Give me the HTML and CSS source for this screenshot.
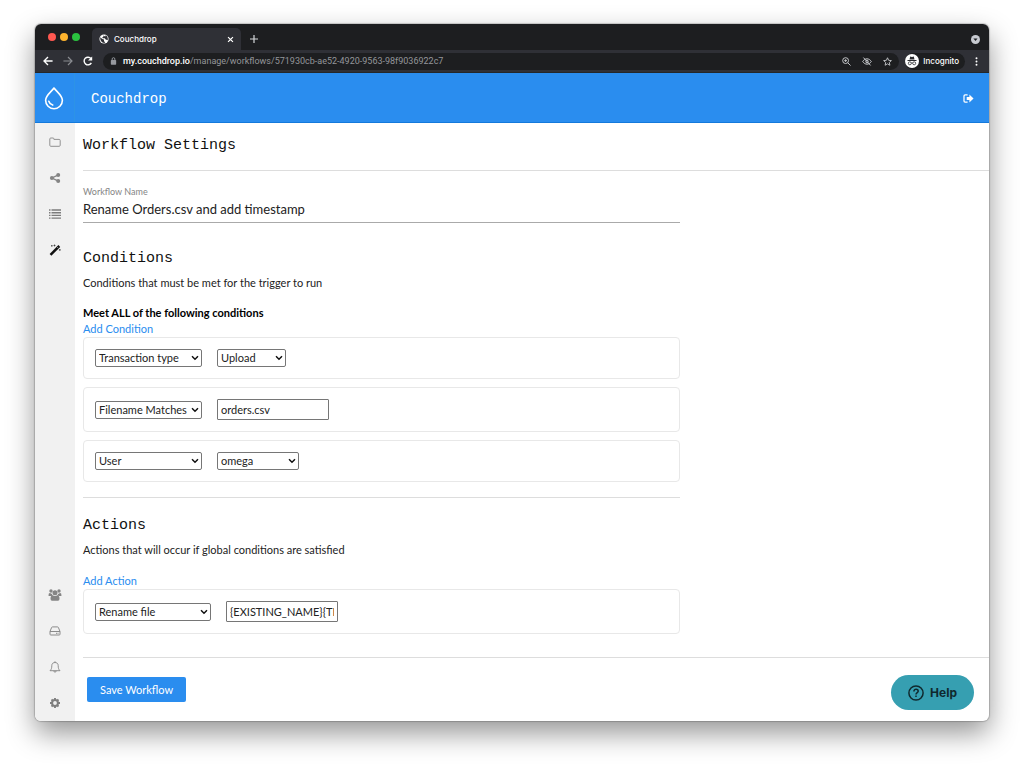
FILE: index.html
```html
<!DOCTYPE html>
<html lang="en">
<head>
<meta charset="utf-8">
<title>Couchdrop</title>
<meta name="viewport" content="width=device-width, initial-scale=1">
<link rel="stylesheet" href="styles.css">
</head>
<body>
<div class="window">
  <div class="tabstrip">
    <div class="lights"><span class="light red"></span><span class="light yellow"></span><span class="light green"></span></div>
    <div class="tab">
      <svg class="globe" viewBox="0 0 24 24" width="10" height="10"><circle cx="12" cy="12" r="11" fill="#fff"/><path d="M3 8l5 4 4 1v4l3 4c-6 2-13-4-12-13zM10 3l1 3-3 2 1 2h5l2 3 5 2c1-5-1-10-5-12l-1 3-3-1z" fill="#2f3036"/></svg>
      <span class="tab-title">Couchdrop</span>
      <button class="plain" aria-label="Close tab"><svg viewBox="0 0 10 10" width="7" height="7"><path d="M1.500 1.500l7 7m0-7l-7 7" stroke="#fff" stroke-width="1.700"/></svg></button>
    </div>
    <button class="plain new-tab" aria-label="New tab"><svg viewBox="0 0 10 10" width="8" height="8"><path d="M5 0v10M0 5h10" stroke="#d6d7da" stroke-width="1.500"/></svg></button>
    <button class="plain tab-search" aria-label="Search tabs"><svg viewBox="0 0 10 10" width="9" height="9"><circle cx="5" cy="5" r="5" fill="#c7cad0"/><path d="M2.700 3.800h4.600L5 6.800z" fill="#1d1e20"/></svg></button>
  </div>
  <div class="toolbar">
    <button class="plain" aria-label="Back"><svg viewBox="0 0 12 12" width="10" height="10" fill="none" stroke="#fff" stroke-width="1.600"><path d="M11.500 6H1.500M6 1.200L1.200 6 6 10.800"/></svg></button>
    <button class="plain" aria-label="Forward"><svg viewBox="0 0 12 12" width="10" height="10" fill="none" stroke="#898b90" stroke-width="1.400"><path d="M.5 6h10M6 1.200L10.800 6 6 10.800"/></svg></button>
    <button class="plain" aria-label="Reload"><svg viewBox="0 0 12 12" width="10" height="10"><path d="M10 8.200A4.600 4.600 0 1 1 9.600 3.200" fill="none" stroke="#fff" stroke-width="1.700"/><path d="M11 .5v5H6z" fill="#fff"/></svg></button>
    <div class="address">
      <svg viewBox="0 0 10 12" width="7" height="8"><rect x="1" y="4.500" width="8" height="7" rx="1" fill="#96999e"/><path d="M3 5V3a2 2 0 0 1 4 0v2" fill="none" stroke="#96999e" stroke-width="1.400"/></svg>
      <span class="url"><b>my.couchdrop.io</b>/manage/workflows/571930cb-ae52-4920-9563-98f9036922c7</span>
      <span class="address-tools">
        <button class="plain" aria-label="Zoom"><svg viewBox="0 0 12 12" width="9" height="9" fill="none" stroke="#c6c8cc" stroke-width="1.300"><circle cx="4.800" cy="4.800" r="3.900"/><path d="M7.700 7.700l3.700 3.700M3 4.800h3.600M4.800 3v3.600"/></svg></button>
        <button class="plain" aria-label="Cookies blocked"><svg viewBox="0 0 14 12" width="10" height="9" fill="none" stroke="#c6c8cc" stroke-width="1.400"><path d="M1 6c3-5 9-5 12 0-3 5-9 5-12 0z"/><circle cx="7" cy="6" r="1.800"/><path d="M2 .5l10 11"/></svg></button>
        <button class="plain" aria-label="Bookmark"><svg viewBox="0 0 12 12" width="9" height="9" fill="none" stroke="#c6c8cc" stroke-width="1.200"><path d="M6 1l1.500 3.400 3.700.4-2.800 2.500.8 3.700L6 9.100 2.800 11l.8-3.700L.8 4.800l3.700-.4z"/></svg></button>
      </span>
    </div>
    <div class="incognito">
      <svg viewBox="0 0 14 14" width="14" height="14"><circle cx="7" cy="7" r="7" fill="#fff"/><path d="M4.500 5.500l.7-3 1.800.4 1.800-.4.7 3zM2.500 6h9v.9h-9z" fill="#2c2d31"/><g fill="none" stroke="#2c2d31" stroke-width=".8"><circle cx="4.800" cy="9.300" r="1.500"/><circle cx="9.200" cy="9.300" r="1.500"/><path d="M6.300 9q.7-.5 1.400 0"/></g></svg>
      <span>Incognito</span>
    </div>
    <button class="plain menu" aria-label="Menu"><svg viewBox="0 0 4 12" width="3" height="9" fill="#fff"><circle cx="2" cy="1.600" r="1.300"/><circle cx="2" cy="6" r="1.300"/><circle cx="2" cy="10.400" r="1.300"/></svg></button>
  </div>
  <header class="header">
    <a class="logo" href="#" aria-label="Home"><svg viewBox="0 0 20 24" width="20" height="24" fill="none" stroke="#fff" stroke-width="1.600" stroke-linecap="round"><path d="M10 2C7.500 5.500 1.600 9.500 1.600 14.300a8.400 8.400 0 0 0 16.800 0C18.400 9.500 12.500 5.500 10 2z" stroke-linejoin="round"/><path d="M4.800 15.300c.6 2 2 3.300 3.900 3.800"/></svg></a>
    <span class="brand">Couchdrop</span>
    <a class="logout" href="#" aria-label="Log out"><svg viewBox="0 0 12 10" width="11" height="9"><path d="M5 1.100H2.200A1.200 1.200 0 0 0 1 2.300v5.400a1.200 1.200 0 0 0 1.200 1.200H5" fill="none" stroke="#fff" stroke-width="1.400"/><path d="M4 3.200h3V.6L11.600 5 7 9.400V6.800H4z" fill="#fff"/></svg></a>
  </header>
  <div class="app">
    <nav class="sidebar">
      <a href="#" aria-label="Files"><svg viewBox="0 0 12 12" width="12" height="12" fill="none" stroke="#929292"><path d="M.8 9.300V3q0-1 1-1h2.300q.8 0 .8 1v.4h5.300q1 0 1 1v4.900q0 1-1 1H1.800q-1 0-1-1z"/></svg></a>
      <a href="#" aria-label="Shares"><svg viewBox="0 0 12 12" width="12" height="12" fill="#848484"><path d="M9.300 2.800L3 6l6.300 3.200" fill="none" stroke="#848484" stroke-width="1.300"/><circle cx="9.200" cy="2.900" r="2"/><circle cx="2.900" cy="6" r="2"/><circle cx="9.200" cy="9.100" r="2"/></svg></a>
      <a href="#" aria-label="Logs"><svg viewBox="0 0 12 12" width="12" height="12"><path d="M0 2h1.500M0 4.700h1.500M0 7.400h1.500M0 10.100h1.500M2.500 2H12M2.500 4.700H12M2.500 7.400H12M2.500 10.100H12" stroke="#7c7c7c" stroke-width="1.400"/></svg></a>
      <a href="#" aria-label="Workflows"><svg viewBox="0 0 12 12" width="12" height="12"><path d="M1.500 10.800L10.300 2" stroke="#111" stroke-width="2.500"/><path d="M8.300 3.200l1 1" stroke="#f1f1f1" stroke-width=".7"/><path d="M5.500.5v2M4.500 1.500h2M2.800 1v1.600M2 1.800h1.600M10.800 5v1.800M9.900 5.900h1.800" stroke="#333" stroke-width=".7"/></svg></a>
      <a class="push" href="#" aria-label="Users"><svg viewBox="0 0 14 12" width="14" height="12" fill="#858585"><circle cx="3" cy="2" r="1.700"/><circle cx="11" cy="2" r="1.700"/><circle cx="7" cy="3.800" r="2.500"/><path d="M.5 6.500q0-2.400 1.400-2.400L4 5l.4 1.200-1 .8H1.300q-.8 0-.8-.5zM13.500 6.500q0-2.400-1.400-2.400L10 5l-.4 1.200 1 .8h2.100q.8 0 .8-.5zM2.500 9.800q0-3.500 2.100-3.500 2.400 1.300 4.800 0 2.100 0 2.100 3.500 0 1.900-1.500 1.900H4q-1.500 0-1.500-1.900z"/></svg></a>
      <a href="#" aria-label="Storage"><svg viewBox="0 0 12 12" width="12" height="12" fill="none" stroke="#8a8a8a"><path d="M1 6.500l1.600-4q.2-.6.900-.6h5q.7 0 .9.600l1.600 4v2.700q0 .8-.8.800H1.800Q1 10 1 9.200zM1 6.500h10"/><path d="M7 8.300h.8M8.600 8.300h.8" stroke-width="1.200"/></svg></a>
      <a href="#" aria-label="Notifications"><svg viewBox="0 0 12 12" width="12" height="12" fill="none" stroke="#858585" stroke-width=".9"><path d="M6 .3v1M1 9.700C2.400 8.500 2.800 7 2.800 4.600 2.800 2.500 4.300 1.500 6 1.500s3.200 1 3.200 3.100c0 2.400.4 3.900 1.800 5.100zM4.800 9.900a1.200 1.200 0 0 0 2.400 0"/></svg></a>
      <a href="#" aria-label="Settings"><svg viewBox="0 0 12 12" width="12" height="12" fill="none" stroke="#7f7f7f"><circle cx="6" cy="6" r="2.900" stroke-width="2"/><path d="M6 1v2M6 9v2M1 6h2M9 6h2M2.500 2.500l1.400 1.400M8.100 8.100l1.400 1.400M2.500 9.500l1.400-1.400M8.100 3.900l1.400-1.400" stroke-width="1.900"/></svg></a>
    </nav>
    <main class="content">
      <h1 class="title page-title">Workflow Settings</h1>
      <form class="form">
        <div class="field">
          <label for="name">Workflow Name</label>
          <input class="name" id="name" type="text" value="Rename Orders.csv and add timestamp">
        </div>
        <section class="section">
          <h2 class="title">Conditions</h2>
          <p class="hint">Conditions that must be met for the trigger to run</p>
          <p class="rule">Meet ALL of the following conditions</p>
          <a class="add" href="#">Add Condition</a>
          <div class="rows">
            <div class="row">
              <select class="kind" aria-label="Condition type"><option>Transaction type</option></select>
              <select class="upload" aria-label="Transaction type"><option>Upload</option></select>
            </div>
            <div class="row">
              <select class="kind" aria-label="Condition type"><option>Filename Matches</option></select>
              <input class="text" type="text" aria-label="Filename" value="orders.csv">
            </div>
            <div class="row">
              <select class="kind" aria-label="Condition type"><option>User</option></select>
              <select class="user" aria-label="User"><option>omega</option></select>
            </div>
          </div>
        </section>
        <section class="section actions">
          <h2 class="title">Actions</h2>
          <p class="hint">Actions that will occur if global conditions are satisfied</p>
          <a class="add" href="#">Add Action</a>
          <div class="row">
            <select class="action" aria-label="Action type"><option>Rename file</option></select>
            <input class="text" type="text" aria-label="New name" value="{EXISTING_NAME}{TIMESTAMP}">
          </div>
        </section>
      </form>
      <div class="footer"><button class="save" type="button">Save Workflow</button></div>
    </main>
    <button class="help" type="button"><svg viewBox="0 0 16 16" width="16" height="16" fill="none" stroke="#10292e" stroke-width="1.500"><circle cx="8" cy="8" r="7.100"/><path d="M5.900 6.400c0-2.900 4.300-2.700 4.300-.2C10.200 7.700 8 7.600 8 9.500"/><path d="M8 10.600v1.500"/></svg>Help</button>
  </div>
</div>
</body>
</html>
```
FILE: styles.css
```css
* { box-sizing: border-box; }
body {
  margin: 0;
  min-height: 100vh;
  padding: 24px 35px 46px;
  display: flex;
  background: #fff;
  color: #222;
  font: 11px/16px Lato, "Open Sans", sans-serif;
}
h1, h2, p { margin: 0; }
svg { display: block; flex: none; }
a { color: #2a8def; text-decoration: none; }
.plain { padding: 0; border: 0; background: none; }

.window {
  flex: 1;
  min-width: 0;
  display: flex;
  flex-direction: column;
  overflow: hidden;
  border-radius: 6px;
  background: #fff;
  box-shadow: 0 0 1px 1px rgba(0, 0, 0, .18), 0 12px 28px rgba(0, 0, 0, .42);
}

.tabstrip {
  display: flex;
  height: 26px;
  background: #1d1e20;
  align-items: center;
}
.lights { display: flex; gap: 4px; padding-left: 13px; width: 57px; }
.light { width: 8px; height: 8px; border-radius: 50%; }
.red { background: #fe5850; }
.yellow { background: #fdb32d; }
.green { background: #2bc33f; }
.tab {
  display: flex;
  align-items: center;
  align-self: flex-end;
  width: 149px;
  height: 22px;
  padding: 0 7px;
  gap: 5px;
  border-radius: 5px 5px 0 0;
  background: #2f3036;
  color: #fff;
  font: 500 8px/12px Inter, sans-serif;
}
.tab-title { flex: 1; }
.new-tab { margin: 4px 0 0 9px; }
.tab-search { margin: 4px 9px 0 auto; }

.toolbar {
  display: flex;
  align-items: center;
  height: 23px;
  padding: 0 11px 0 8px;
  gap: 10px;
  background: #2f3036;
  border-bottom: 1px solid #24272a;
}
.address {
  flex: 1;
  display: flex;
  align-items: center;
  height: 17px;
  padding: 0 7px;
  gap: 6px;
  border-radius: 9px;
  background: #1d1e20;
  color: #94969a;
  font: 9px/12px Roboto, sans-serif;
}
.address b { font-weight: 500; color: #fff; }
.address-tools { display: flex; gap: 11px; margin-left: auto; }
.incognito {
  display: flex;
  align-items: center;
  gap: 4px;
  height: 17px;
  margin-left: -4px;
  padding-right: 6px;
  border-radius: 9px;
  background: #1d1e20;
  color: #fff;
  font: 500 8px/12px Inter, sans-serif;
}

.header {
  display: flex;
  align-items: center;
  height: 50px;
  padding-right: 15px;
  background: #2a8def;
  border-bottom: 1px solid #1479db;
  color: #fff;
}
.logo {
  display: flex;
  align-items: center;
  justify-content: center;
  align-self: stretch;
  width: 40px;
  padding-right: 2px;
  border-right: 1px solid #2d93e6;
}
.brand { padding: 2px 0 0 16px; font: 14px/20px "Liberation Mono", monospace; }
.logout { margin-left: auto; padding-top: 1px; }

.app { position: relative; flex: 1; display: flex; }
.sidebar {
  display: flex;
  flex-direction: column;
  align-items: center;
  width: 40px;
  padding-top: 1px;
  background: #f1f1f1;
}
.sidebar a { display: flex; align-items: center; height: 36px; }
.sidebar .push { margin-top: auto; }

.content { flex: 1; min-width: 0; padding-left: 8px; }
.title { color: #111; font: 15px/20px "Liberation Mono", monospace; }
.page-title { padding: 13px 0 14px; border-bottom: 1px solid #ddd; }
.form { max-width: 597px; }
.field { padding-top: 14px; border-bottom: 1px solid #aaa; }
.field label { display: block; font-size: 9px; line-height: 14px; color: #858585; }
.name {
  display: block;
  width: 100%;
  height: 23px;
  padding: 0 0 3px;
  border: 0;
  background: none;
  color: #222;
  font: 13px/20px Lato, sans-serif;
}
.section { padding: 26px 0 15px; border-bottom: 1px solid #ddd; }
.hint { padding: 6px 0 14px; }
.rule { font-weight: 700; color: #000; }
.add { display: block; }
.rows { display: flex; flex-direction: column; gap: 8px; }
.row {
  display: flex;
  align-items: center;
  gap: 15px;
  padding: 11px;
  border: 1px solid #e8e8e8;
  border-radius: 4px;
}
.row select {
  appearance: none;
  height: 18px;
  padding: 0 12px 0 3px;
  border: 1px solid #767676;
  border-radius: 2px;
  background: #fff url("data:image/svg+xml,%3Csvg xmlns='http://www.w3.org/2000/svg' viewBox='0 0 8 6'%3E%3Cpath d='M1 1.200l3 3 3-3' fill='none' stroke='%23111' stroke-width='1.500'/%3E%3C/svg%3E") right 2px center / 8px 6px no-repeat;
  color: #222;
  font: 11px/16px Lato, sans-serif;
}
.kind { width: 107px; }
.upload { width: 69px; }
.user { width: 82px; }
.action { width: 116px; }
.text {
  width: 112px;
  height: 21px;
  padding: 0 3px;
  border: 1px solid #767676;
  border-radius: 1px;
  color: #222;
  font: 11px/16px Lato, sans-serif;
}
.actions { padding: 18px 0 23px; border: 0; }
.actions .hint { padding-bottom: 15px; }
.footer { padding: 19px 4px; border-top: 1px solid #ddd; }
.save {
  height: 25px;
  padding: 0 13px;
  border: 0;
  border-radius: 2px;
  background: #2a8def;
  color: #fff;
  font: 11px/16px Lato, sans-serif;
}
.help {
  position: absolute;
  right: 15px;
  bottom: 11px;
  display: flex;
  align-items: center;
  gap: 6px;
  height: 35px;
  padding: 0 17px;
  border: 0;
  border-radius: 18px;
  background: #369fb1;
  color: #10292e;
  font: 700 12px/16px Inter, sans-serif;
}
```
